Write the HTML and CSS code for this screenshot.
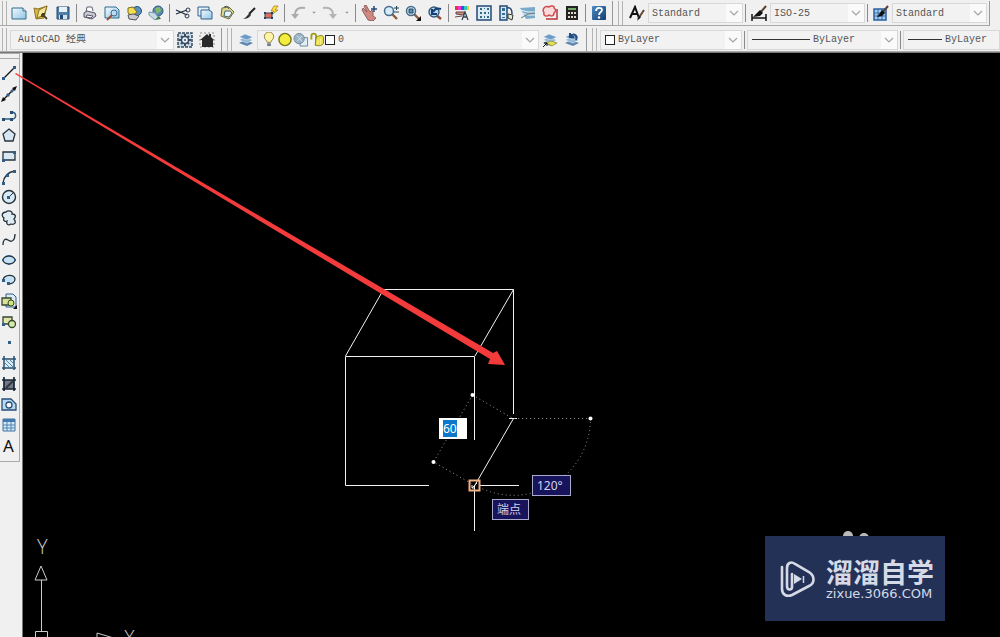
FILE: index.html
```html
<!DOCTYPE html>
<html lang="zh-CN">
<head>
<meta charset="utf-8">
<title>AutoCAD 经典</title>
<link rel="stylesheet" href="styles.css">
</head>
<body>
<svg class="defs" aria-hidden="true">
  <defs>
    <linearGradient id="paper" x1="0" y1="0" x2="1" y2="1"><stop offset="0" stop-color="#f4fbff"/><stop offset="1" stop-color="#8fc4e6"/></linearGradient>
    <linearGradient id="helpbg" x1="0" y1="0" x2="1" y2="1"><stop offset="0" stop-color="#4d8cc2"/><stop offset="1" stop-color="#123c70"/></linearGradient>
    <symbol id="chev" viewBox="0 0 16 16"><path d="M4 6l4 4 4-4" fill="none" stroke="#a4a4a4" stroke-width="1.2"/></symbol>
    <symbol id="lens" viewBox="0 0 16 16"><path d="M9 9l5 5" stroke="#8a5b3c" stroke-width="2.4"/><circle cx="6" cy="6" r="4.5" fill="#d5ebf8" stroke="#456b8c" stroke-width="1.5"/></symbol>
    <symbol id="layers" viewBox="0 0 16 16"><path d="M1 11l6-3 8 3-6 3z" fill="#5c86b0"/><path d="M1 8l6-3 8 3-6 3z" fill="#8fb4d4" stroke="#fff" stroke-width=".5"/><path d="M1 5l6-3 8 3-6 3z" fill="#6f9cc6" stroke="#fff" stroke-width=".5"/></symbol>
  </defs>
</svg>
<header class="toolbars">
  <div class="row">
    <div class="bar bar-main">
      <span class="grip"></span>
      <button aria-label="新建"><svg viewBox="0 0 16 16"><path d="M1 3h11l3 3v8H1z" fill="url(#paper)" stroke="#2f6c8c"/><path d="M12 3v3h3" fill="#fff" stroke="#2f6c8c"/></svg></button>
      <button aria-label="打开"><svg viewBox="0 0 16 16"><path d="M1 3l4 1 9-3-3 12-8 1z" fill="#d9b640" stroke="#8d7427"/><path d="M6 5l8-4-3 9-7 3z" fill="#f6e79a" stroke="#8d7427"/><path d="M9 9l5 5M9 9v3M9 9h3" stroke="#4b4420" stroke-width="1.800"/></svg></button>
      <button aria-label="保存"><svg viewBox="0 0 16 16"><path d="M2 2h12v12H2z" fill="#4f7ea8" stroke="#24486e"/><path d="M4 2h8v5H4z" fill="#e5f1f8"/><path d="M4 10h8v4H4z" fill="#d0e2ee"/><path d="M5 10h3v4H5z" fill="#24486e"/></svg></button>
      <span class="sep"></span>
      <button aria-label="打印"><svg viewBox="0 0 16 16"><path d="M4 7l1-5h5l1 4" fill="#fff" stroke="#626277"/><path d="M2 8l3-2 8 2 1 3-4 3-8-2z" fill="#c9c9d6" stroke="#555567"/><path d="M5 10l6 1-2 2-5-1z" fill="#fff" stroke="#555567"/></svg></button>
      <button aria-label="打印预览"><svg viewBox="0 0 16 16"><path d="M1 2h11l3 3v8H1z" fill="url(#paper)" stroke="#2f6c8c"/><circle cx="10" cy="8" r="3" fill="#b9dcf2" stroke="#3e6690"/><path d="M8 10l-5 5" stroke="#9a4d30" stroke-width="2"/></svg></button>
      <button aria-label="发布"><svg viewBox="0 0 16 16"><circle cx="11" cy="6" r="4.500" fill="#5b90bd" stroke="#28517a"/><path d="M2 3l5-1 4 5-5 4-4-3z" fill="#f4df52" stroke="#7c6c16"/><path d="M2 10l5-1 6 2-3 4-7-1z" fill="#c9c9d4" stroke="#555"/></svg></button>
      <button aria-label="三维发布"><svg viewBox="0 0 16 16"><circle cx="10" cy="6" r="5" fill="#5988b5" stroke="#34597c"/><path d="M7 3l5-1 1 4-4 3z" fill="#80ba69"/><path d="M1 7l6 1 3 4-3 3-6-5z" fill="#c9dce6" stroke="#7899aa"/><path d="M7 15l6-1-2-3" fill="#3f7b44"/></svg></button>
      <span class="sep"></span>
      <button aria-label="剪切"><svg viewBox="0 0 16 16"><path d="M1 5l11 5M1 9l11-4" stroke="#1d2c3d" stroke-width="1.300"/><circle cx="13" cy="5" r="2" fill="none" stroke="#28394c"/><circle cx="12" cy="11" r="2" fill="none" stroke="#28394c"/></svg></button>
      <button aria-label="复制"><svg viewBox="0 0 16 16"><path d="M1 2h11v9H1z" fill="#e4f2fb" stroke="#315f8c"/><path d="M4 5h8l3 2v7H4z" fill="url(#paper)" stroke="#315f8c"/></svg></button>
      <button aria-label="粘贴"><svg viewBox="0 0 16 16"><path d="M3 3l7-1 5 5-5 7-8-3z" fill="#dcd58b" stroke="#6c6b38"/><path d="M6 6h5l2 2-3 4-5-1z" fill="#e8f3fa" stroke="#467"/><path d="M5 2l3-1 2 3" fill="none" stroke="#555"/></svg></button>
      <button aria-label="特性匹配"><svg viewBox="0 0 16 16"><path d="M14 3L8 9" stroke="#222" stroke-width="2"/><path d="M9 8l1 2c-2 3-5 4-8 4 3-1 4-4 7-6z" fill="#332e28"/></svg></button>
      <button aria-label="块编辑器"><svg viewBox="0 0 16 16"><path d="M11 1l-3 5h3l-4 5 8-6h-3l3-4z" fill="#ffe03c" stroke="#a87408" stroke-width=".7"/><path d="M2 8h7v5H2z" fill="#e16b59" stroke="#31455e"/><path d="M1 7h2v2H1zM8 7h2v2H8zM1 12h2v2H1zM8 12h2v2H8z" fill="#253d62"/></svg></button>
      <span class="sep"></span>
      <button aria-label="放弃"><svg viewBox="0 0 16 16"><path d="M15 3C9 2 5 4 5 10" fill="none" stroke="#acacac" stroke-width="2"/><path d="M1 9h8l-4 5z" fill="#acacac"/></svg></button>
      <button class="drop" aria-label="放弃列表"><svg viewBox="0 0 16 16"><path d="M5 6h6l-3 3z" fill="#999"/></svg></button>
      <button aria-label="重做"><svg viewBox="0 0 16 16"><path d="M1 3c6-1 10 1 10 7" fill="none" stroke="#b4b4b4" stroke-width="2"/><path d="M7 9h8l-4 5z" fill="#b4b4b4"/></svg></button>
      <button class="drop drop-last" aria-label="重做列表"><svg viewBox="0 0 16 16"><path d="M5 6h6l-3 3z" fill="#999"/></svg></button>
      <span class="sep"></span>
      <button aria-label="实时平移"><svg viewBox="0 0 16 16"><path d="M1 5l1-2 4 4-3-6 2-1 4 7 2-2 1 2v4l3 2-3 3-5-1z" fill="#cf8880" stroke="#7c4e52" stroke-width=".8"/><path d="M13 1v6M10 4h6" stroke="#294a73" stroke-width="1.500"/></svg></button>
      <button aria-label="实时缩放"><svg viewBox="0 0 16 16"><use href="#lens"/><path d="M11 3h5M13.500 1v4M11 7h5" stroke="#245"/></svg></button>
      <button aria-label="窗口缩放"><svg viewBox="0 0 16 16"><use href="#lens"/><path d="M4 4h4v4H4z" fill="#5f8fb9" stroke="#245"/><path d="M16 11v5h-5z" fill="#111"/></svg></button>
      <button aria-label="缩放上一个"><svg viewBox="0 0 16 16"><path d="M9 10l5 4" stroke="#8a4d36" stroke-width="2.500"/><circle cx="7" cy="7" r="5" fill="#b8d8ee" stroke="#36587c" stroke-width="1.400"/><path d="M6 7c2-4 5-4 8-3M5 4v5h5" fill="none" stroke="#163f74" stroke-width="2"/></svg></button>
      <span class="sep"></span>
      <button aria-label="特性"><svg viewBox="0 0 16 16"><path d="M1 1h3v4H1z" fill="#e33"/><path d="M4 1h3v4H4z" fill="#e3d"/><path d="M7 1h3v4H7z" fill="#35d"/><path d="M10 1h3v4h-3z" fill="#2bc9c0"/><path d="M13 1h2v4h-2z" fill="#ec3"/><path d="M2 7h9l-2 3-7-1zM1 12l7-1" fill="#c98c82" stroke="#694949"/><path d="M8 15l3-8 3 8M9 12h4" fill="none" stroke="#345" stroke-width="1.300"/></svg></button>
      <button aria-label="设计中心"><svg viewBox="0 0 16 16"><path d="M1 1h14v14H1z" fill="#dceaf5" stroke="#244a76" stroke-width="1.500"/><path d="M4 3h2v2H4zM4 7h2v2H4zM4 11h2v2H4zM8 3h1v1H8zM11 3h2v2h-2zM8 7h2v2H8zM12 7h1v2h-1zM8 11h1v2H8zM11 11h2v2h-2z" fill="#2f6e7d"/></svg></button>
      <button aria-label="工具选项板"><svg viewBox="0 0 16 16"><path d="M2 1h7v14H2z" fill="#d5e8f5" stroke="#244a76" stroke-width="1.500"/><path d="M4 3h3v3H4zM4 8h3v2H4zM4 12h3v1H4z" fill="#347095"/><path d="M9 3c4-1 5 2 5 6" fill="none" stroke="#244a76" stroke-width="1.500"/><path d="M10 9l5 1-1 5-4-2z" fill="#dec" stroke="#333"/></svg></button>
      <button aria-label="图纸集"><svg viewBox="0 0 16 16"><path d="M0 3l15-1v11l-9 1z" fill="#7aaac9"/><path d="M0 5l8 2h7M2 8l6 2h7" stroke="#e7f3fa" stroke-width="1.200" fill="none"/><path d="M1 13l7-4 7-1" stroke="#6b7b7d" fill="none"/></svg></button>
      <button aria-label="标记集"><svg viewBox="0 0 16 16"><path d="M4 14h11V4" fill="none" stroke="#b33" stroke-width="1.500"/><path d="M2 3c2-3 4-1 5-1 2-2 6-1 5 1 3 2 1 4 0 5 0 4-4 3-5 2-2 2-6 1-5-2-1-2-1-4 0-5z" fill="#fbdada" stroke="#d04b50" stroke-width="1.500"/></svg></button>
      <button aria-label="计算器"><svg viewBox="0 0 16 16"><path d="M2 1h12v14H2z" fill="#25221f"/><path d="M4 3h8v2H4z" fill="#72a967"/><path d="M4 7h2v2H4zM7 7h2v2H7zM10 7h2v2h-2zM4 11h2v2H4zM7 11h2v2H7zM10 11h2v2h-2z" fill="#ddd8cd"/></svg></button>
      <span class="sep"></span>
      <button aria-label="帮助"><svg viewBox="0 0 16 16"><rect x="1" y="1" width="14" height="14" rx="1" fill="url(#helpbg)"/><path d="M5 6c0-4 6-4 6-1 0 2-3 2-3 5" fill="none" stroke="#fff" stroke-width="1.800"/><circle cx="8" cy="12.500" r="1.200" fill="#fff"/></svg></button>
    </div>
    <div class="bar bar-styles">
      <span class="grip"></span>
      <button aria-label="文字样式"><svg viewBox="0 0 16 16"><path d="M1 13L6 2l4 11M3 9h6" fill="none" stroke="#111" stroke-width="2"/><path d="M15 5l-6 9" stroke="#674735" stroke-width="2"/><path d="M10 11l2 1-4 4z" fill="#111"/></svg></button>
      <span class="combo"><select aria-label="文字样式"><option>Standard</option></select><svg viewBox="0 0 16 16"><use href="#chev"/></svg></span>
      <span class="sep"></span>
      <button aria-label="标注样式"><svg viewBox="0 0 16 16"><path d="M1 9v7M15 9v7M1 13h14" stroke="#111" stroke-width="1.500"/><path d="M15 1L9 8" stroke="#5b4032" stroke-width="2"/><path d="M9 5l3 3-3 3-7 1z" fill="#111"/></svg></button>
      <span class="combo"><select aria-label="标注样式"><option>ISO-25</option></select><svg viewBox="0 0 16 16"><use href="#chev"/></svg></span>
      <span class="sep"></span>
      <button aria-label="表格样式"><svg viewBox="0 0 16 16"><path d="M1 4h12v11H1z" fill="#a5cdf0" stroke="#285e9e" stroke-width="1.500"/><path d="M1 8h12M1 11h12M5 4v11M9 4v11" stroke="#356ba8"/><path d="M15 1L9 8" stroke="#594235" stroke-width="2"/><path d="M9 5l3 3-3 3-5 1z" fill="#111"/></svg></button>
      <span class="combo"><select aria-label="表格样式"><option>Standard</option></select><svg viewBox="0 0 16 16"><use href="#chev"/></svg></span>
    </div>
  </div>
  <div class="row">
    <div class="bar bar-space">
      <span class="grip"></span>
      <span class="combo"><select aria-label="工作空间"><option>AutoCAD 经典</option></select><svg viewBox="0 0 16 16"><use href="#chev"/></svg></span>
      <button aria-label="工作空间设置"><svg viewBox="0 0 16 16"><path d="M1 1h14v14H1z" fill="#c8d8e6" stroke="#334a5e" stroke-width="1.500" stroke-dasharray="3 1"/><path d="M8 2v12M2 8h12M4 4l8 8M12 4l-8 8" stroke="#384c60" stroke-width="2"/><circle cx="8" cy="8" r="3.500" fill="#e9f2f9" stroke="#384c60" stroke-width="1.500"/><circle cx="8" cy="8" r="1" fill="#384c60"/></svg></button>
      <button aria-label="我的工作空间"><svg viewBox="0 0 16 16"><path d="M1 1h14v14H1z" fill="none" stroke="#8a8a8a" stroke-dasharray="2 2"/><path d="M1 8l7-6 2 2V2h2v3l3 3h-1v7H3V8z" fill="#292929"/></svg></button>
    </div>
    <div class="bar bar-layers">
      <span class="grip"></span>
      <button aria-label="图层特性"><svg viewBox="0 0 16 16"><use href="#layers"/></svg></button>
      <span class="combo combo-layers">
        <svg viewBox="0 0 16 16"><path d="M6 11c0-2-3-3-3-6a5 5 0 0110 0c0 3-3 4-3 6z" fill="#fff4a6" stroke="#8a8146"/><path d="M6 12h4v3H6z" fill="#777b8a"/></svg>
        <svg viewBox="0 0 16 16"><circle cx="8" cy="8" r="6.500" fill="#f3ed3d" stroke="#77761b" stroke-width="1.500"/></svg>
        <svg viewBox="0 0 16 16"><path d="M7 6h8v9H7z" fill="#e1edf5" stroke="#6d8498"/><circle cx="6" cy="7" r="5.500" fill="#9bb3c4" stroke="#71899c"/><path d="M4 4l5 6M9 4l-5 6" stroke="#d3e1e9"/></svg>
        <svg viewBox="0 0 16 16"><path d="M2 8V4c0-3 5-3 5 0v5" fill="none" stroke="#a19b21" stroke-width="2"/><path d="M7 6c3-3 8-3 8 0v6c-2 3-6 3-9 2z" fill="#e8df4c" stroke="#7c771d"/><path d="M9 8v5M12 7v6" stroke="#fff6a0"/></svg>
        <i class="swatch"></i>
        <select aria-label="图层"><option>0</option></select><svg class="arrow" viewBox="0 0 16 16"><use href="#chev"/></svg>
      </span>
      <button aria-label="将对象的图层置为当前"><svg viewBox="0 0 16 16"><use href="#layers"/><path d="M4 11l5-2 6 2-5 3z" fill="#e4df55" stroke="#817e24" stroke-width=".6"/><path d="M1 15l4-4M2 11h3v3" fill="none" stroke="#111"/></svg></button>
      <button aria-label="上一个图层"><svg viewBox="0 0 16 16"><use href="#layers"/><path d="M12 8c2-5-2-7-6-4M6 1v4h4" fill="none" stroke="#244c80" stroke-width="2"/></svg></button>
    </div>
    <div class="bar bar-props">
      <span class="grip"></span>
      <span class="combo combo-color"><i class="swatch"></i><select aria-label="颜色"><option>ByLayer</option></select><svg viewBox="0 0 16 16"><use href="#chev"/></svg></span>
      <span class="sep"></span>
      <span class="combo combo-type"><i class="stroke"></i><select aria-label="线型"><option>ByLayer</option></select><svg viewBox="0 0 16 16"><use href="#chev"/></svg></span>
      <span class="sep"></span>
      <span class="combo combo-weight"><i class="stroke"></i><select aria-label="线宽"><option>ByLayer</option></select></span>
    </div>
  </div>
</header>
<main class="work">
  <nav class="side" aria-label="绘图">
    <div class="tools">
      <button aria-label="直线"><svg viewBox="0 0 16 16"><path d="M2 14L14 2" stroke="#111" stroke-width="1.300"/><path d="M1 12h3v3H1zM12 1h3v3h-3z" fill="#315e87"/></svg></button>
      <button aria-label="构造线"><svg viewBox="0 0 16 16"><path d="M2 14L14 2" stroke="#111" stroke-width="1.300"/><path d="M0 16l2-5 3 3zM16 0l-2 5-3-3z" fill="#111"/><circle cx="7" cy="9" r="1.700" fill="#315e87"/><circle cx="11" cy="5" r="1.500" fill="#315e87"/></svg></button>
      <button aria-label="多段线"><svg viewBox="0 0 16 16"><path d="M1 12h10c5 0 5-7-1-7" fill="none" stroke="#315e87" stroke-width="1.500"/><path d="M1 11h3v3H1zM9 11h3v3H9zM9 4h3v3H9z" fill="#244c70"/></svg></button>
      <button aria-label="正多边形"><svg viewBox="0 0 16 16"><path d="M8 2l6 5-2 7H4L2 7z" fill="#d7e7f1" stroke="#26323c" stroke-width="1.300"/></svg></button>
      <button aria-label="矩形"><svg viewBox="0 0 16 16"><path d="M2 4h12v8H2z" fill="#d8e9f3" stroke="#26323c" stroke-width="1.300"/><path d="M1 11h3v3H1zM12 3h3v3h-3z" fill="#315e87"/></svg></button>
      <button aria-label="圆弧"><svg viewBox="0 0 16 16"><path d="M2 14C3 7 7 3 14 2" fill="none" stroke="#26323c" stroke-width="1.300"/><path d="M1 13h3v3H1zM5 5h3v3H5zM12 1h3v3h-3z" fill="#315e87"/></svg></button>
      <button aria-label="圆"><svg viewBox="0 0 16 16"><circle cx="8" cy="8" r="6.500" fill="#d8eaf5" stroke="#26323c" stroke-width="1.400"/><path d="M7 9l5-5" stroke="#26323c"/><path d="M6 7h3v3H6z" fill="#315e87"/></svg></button>
      <button aria-label="修订云线"><svg viewBox="0 0 16 16"><path d="M3 8C0 6 1 2 5 2c2-2 7-1 6 2 4 0 4 3 2 5 3 4 0 6-3 5-3 2-5 0-4-3-3 1-4-1-3-3z" fill="#dfebf2" stroke="#26323c" stroke-width="1.300"/></svg></button>
      <button aria-label="样条曲线"><svg viewBox="0 0 16 16"><path d="M2 14c0-5 2-7 5-5 4 3 7 0 7-6" fill="none" stroke="#26323c" stroke-width="1.300"/></svg></button>
      <button aria-label="椭圆"><svg viewBox="0 0 16 16"><ellipse cx="8" cy="8" rx="6" ry="4" fill="#c4e2f4" stroke="#26323c" stroke-width="1.300"/><path d="M1 7h2v2H1zM7 3h2v2H7zM13 7h2v2h-2zM7 11h2v2H7z" fill="#315e87"/></svg></button>
      <button aria-label="椭圆弧"><svg viewBox="0 0 16 16"><path d="M2 8c1-6 12-6 12-1 0 3-3 5-7 5" fill="#c4e2f4" stroke="#26323c" stroke-width="1.300"/><path d="M1 7h3v3H1zM6 10h3v3H6z" fill="#315e87"/></svg></button>
      <button aria-label="插入块"><svg viewBox="0 0 16 16"><path d="M5 1h7l3 3v10H5z" fill="#dceaf4" stroke="#315e87"/><path d="M1 5h9v7H1z" fill="#d9df9a" stroke="#34482c" stroke-width="1.300"/><circle cx="10" cy="10" r="3" fill="#d1e878" stroke="#34482c"/><path d="M16 12v4h-4z" fill="#111"/></svg></button>
      <button aria-label="创建块"><svg viewBox="0 0 16 16"><path d="M2 3h9v7H2z" fill="#e1e4ae" stroke="#34482c" stroke-width="1.300"/><circle cx="11" cy="10" r="3.500" fill="#d8e9b0" stroke="#34482c" stroke-width="1.300"/><path d="M1 9h3v3H1z" fill="#315e87"/></svg></button>
      <button aria-label="点"><svg viewBox="0 0 16 16"><path d="M7 7h3v3H7z" fill="#315e87"/></svg></button>
      <button aria-label="图案填充"><svg viewBox="0 0 16 16"><path d="M4 4h9v9H4z" fill="#dcecf6"/><path d="M1 4h14M1 13h14M3 1v14M13 1v14" stroke="#294e6e" stroke-width="1.500"/><path d="M4 8l5 5M4 4l9 9M8 4l5 5" stroke="#4f83a8"/></svg></button>
      <button aria-label="渐变色"><svg viewBox="0 0 16 16"><path d="M3 4h10v9H3z" fill="#707985"/><path d="M1 4h14M1 13h14M3 1v14M13 1v14" stroke="#182534" stroke-width="1.700"/><path d="M5 12l7-7" stroke="#313842" stroke-width="2"/></svg></button>
      <button aria-label="面域"><svg viewBox="0 0 16 16"><path d="M1 3h9l5 5v6H1z" fill="#b8daef" stroke="#294e78" stroke-width="1.300"/><circle cx="8" cy="9" r="3" fill="#f5f7f8" stroke="#294e78" stroke-width="1.300"/></svg></button>
      <button aria-label="表格"><svg viewBox="0 0 16 16"><path d="M2 2h12v12H2z" fill="#d5eafa" stroke="#3f719e"/><path d="M2 2h12v3H2z" fill="#4279ae"/><path d="M2 8h12M2 11h12M6 5v9M10 5v9" stroke="#5083af"/></svg></button>
      <button class="letter" aria-label="多行文字">A</button>
    </div>
  </nav>
  <svg class="drawing" aria-hidden="true">
    <g transform="translate(0 -53)">
      <g class="wire">
        <path d="M345.500 356.500V485.500H429M345.500 356.500H474.500V440M383.500 289.500H513.500V414M474.500 486V531M480 485.500H519M509 418.500h8"/>
        <path d="M345.500 356L383.500 289.500M513.500 289.500L475 356M513.500 418.500L475 485"/>
      </g>
      <path class="dots" d="M472.500 395L513 418.500H590M472.500 395L433.500 462L474 485M590.500 418A77 77 0 0 1 475 485"/>
      <g class="points"><circle cx="472.500" cy="395" r="2"/><circle cx="433.500" cy="462" r="2"/><circle cx="590.500" cy="418.500" r="2"/></g>
      <path class="snap" d="M469.500 480.500h10v10h-10z"/><path class="wire" d="M472 488l5-5M472 485v3h3"/>
      <path class="red" d="M16 73L493 353L497 351L505 365L488 364L490 359L15 74z"/>
      <g class="ucs"><path d="M41.500 580V632M35 580l6-14 6 14zM35.500 640v-8.500h12v8.500M97 640v-7l20 6"/></g>
      <text class="axis" x="37" y="554">Y</text><text class="axis" x="124" y="645">X</text>
      <circle cx="848" cy="536" r="5" fill="#bbb"/><circle cx="864" cy="538" r="5" fill="#bbb"/>
    </g>
  </svg>
  <div class="length"><input aria-label="长度" value="60"></div>
  <div class="tip tip-angle">120°</div>
  <div class="tip tip-snap">端点</div>
  <div class="mark">
    <svg viewBox="0 0 36 38"><path d="M2 7v22c0 6 5 8 10 6l17-9c6-3 6-10 0-14L15 4c-4-3-8-1-8 4v18c0 5 5 4 5 1V14" fill="none" stroke="#d5dae6" stroke-width="2.600" stroke-linecap="round"/><path d="M14 14l8 5-8 5z" fill="#d5dae6"/><path d="M23.500 16v7" stroke="#d5dae6" stroke-width="1.500"/></svg>
    <div class="mark-text"><strong>溜溜自学</strong><span>zixue.3066.COM</span></div>
  </div>
</main>
</body>
</html>
```
FILE: styles.css
```css
* { box-sizing: border-box; }
body {
  margin: 0;
  height: 100vh;
  display: flex;
  flex-direction: column;
  overflow: hidden;
  background: #f0f0f0;
  font-family: "Liberation Mono", "Noto Sans CJK SC", monospace;
  font-size: 10px;
  color: #555;
}
.defs { position: absolute; width: 0; height: 0; }
button {
  display: flex;
  align-items: center;
  justify-content: center;
  flex: none;
  width: 22px;
  height: 22px;
  padding: 0;
  border: 0;
  background: none;
}
button svg { width: 16px; height: 16px; }

.toolbars { flex: none; padding-top: 1px; border-bottom: 1px solid #777; }
.row {
  display: flex;
  height: 25px;
  overflow: hidden;
}
.row + .row { height: 26px; padding-top: 2px; }
.bar {
  display: flex;
  flex: none;
  align-items: center;
  border-right: 1px solid #999;
  border-bottom: 1px solid #a8a8a8;
}
.bar-main { padding-right: 2px; }
.bar-styles { padding-right: 2px; }
.bar-space { padding-right: 3px; }
.bar-layers { padding-right: 3px; }
.bar-props { flex: 1 0 auto; border-right: 0; }
.drop { width: 10px; }
.drop-last { width: 12px; }
.drop svg { width: 10px; height: 10px; }
.sep {
  flex: none;
  width: 1px;
  height: 18px;
  margin: 0 2px;
  background: #8a8a8a;
}
.grip {
  flex: none;
  width: 5px;
  height: 24px;
  margin: 0 3px 0 5px;
  border: solid #b4b4b4;
  border-width: 0 1px;
}
.bar-main .grip { margin: 0 1px 0 2px; }
.bar-space .grip { margin: 0 3px 0 2px; }
.combo {
  display: flex;
  flex: none;
  align-items: center;
  width: 95px;
  height: 20px;
  padding-left: 3px;
  border: 1px solid #d8d8d8;
  background: #f2f2f2;
}
.combo select {
  flex: 1;
  min-width: 0;
  height: 18px;
  padding: 0;
  border: 0;
  appearance: none;
  background: none;
  color: #555;
  font: inherit;
}
.combo > svg {
  flex: none;
  width: 16px;
  height: 18px;
  background: #fafafa;
}
.bar-space .combo { width: 164px; padding-left: 7px; }
.combo-layers { width: 282px; }
.combo-layers > svg:not(.arrow) { height: 15px; background: none; }
.combo-layers select { padding-left: 3px; }
.swatch {
  flex: none;
  width: 10px;
  height: 10px;
  border: 1px solid #222;
  background: #fff;
}
.bar-props .combo { padding-left: 4px; gap: 3px; }
.bar-props .combo-color { width: 142px; }
.bar-props .combo-type { width: 151px; }
.bar-props .combo-weight { flex: 1 0 95px; }
.stroke { flex: none; width: 58px; height: 1px; background: #333; }
.combo-weight .stroke { width: 34px; }

.work { position: relative; flex: 1; display: flex; min-height: 0; background: #000; }
.side {
  flex: none;
  width: 23px;
  padding-right: 2px;
  background: #f0f0f0;
  border-right: 1px solid #777;
}
.tools {
  display: flex;
  flex-direction: column;
  height: 409px;
  padding: 9px 0 5px;
  border: solid #aaa;
  border-width: 1px 1px 1px 0;
  background: linear-gradient(#aaa, #aaa) 0 4px / 19px 1px no-repeat;
}
.tools button { flex: 1; width: 17px; min-height: 0; }
.tools .letter { color: #111; font: 17px "Noto Sans", sans-serif; }

.drawing { position: absolute; inset: 0; width: 100%; height: 100%; pointer-events: none; }
.wire { fill: none; stroke: #f2f2f2; stroke-width: 1; }
.dots { fill: none; stroke: #999; stroke-width: 1; stroke-dasharray: 1 3; }
.points { fill: #fff; }
.snap { fill: none; stroke: #f0b080; stroke-width: 2; }
.red { fill: #f43b3b; }
.ucs { fill: none; stroke: #ccc; stroke-width: 1; }
.axis { fill: #ccc; font: 300 20px "Open Sans", "Noto Sans", sans-serif; }

.length {
  position: absolute;
  left: 439px;
  top: 365px;
  width: 28px;
  height: 21px;
  padding: 2px 4px;
  background: #fff;
}
.length input {
  display: block;
  width: 14px;
  height: 17px;
  padding: 0;
  border: 0;
  background: #0c78cc;
  color: #fff;
  font: 12px "Noto Sans", sans-serif;
}
.tip {
  position: absolute;
  height: 21px;
  padding: 0 4px;
  border: 1px solid #aaa8cc;
  background: #17145c;
  color: #d4d2ee;
  font: 12px/19px "Noto Sans", "Noto Sans CJK SC", sans-serif;
}
.tip-angle { left: 532px; top: 422px; width: 39px; }
.tip-snap { left: 492px; top: 446px; width: 37px; }
.mark {
  position: absolute;
  right: 55px;
  bottom: 16px;
  display: flex;
  align-items: center;
  gap: 10px;
  width: 180px;
  height: 85px;
  padding-left: 15px;
  background: #233157;
  color: #d5dae6;
}
.mark svg { flex: none; width: 36px; height: 38px; }
.mark-text { display: flex; flex-direction: column; }
.mark strong { font: bold 27px/30px "Noto Sans CJK SC", sans-serif; }
.mark-text span { font: 13px/14px "DejaVu Sans", sans-serif; }
```
